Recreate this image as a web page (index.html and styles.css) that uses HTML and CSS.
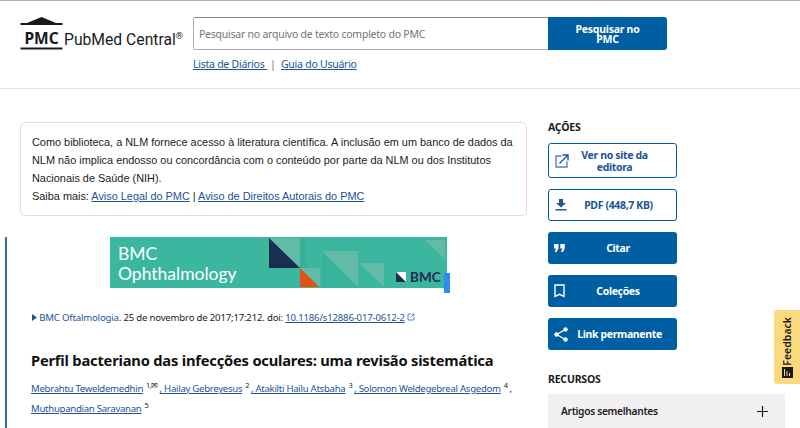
FILE: index.html
```html
<!DOCTYPE html>
<html lang="pt">
<head>
  <meta charset="UTF-8" />
  <meta name="viewport" content="width=device-width, initial-scale=1.0" />
  <title>Perfil bacteriano das infecções oculares - PMC</title>
  <link rel="stylesheet" href="styles.css">
</head>
<body>
  <header class="site-header">
    <a href="#" class="logo">
      <svg class="logo-mark" width="43" height="33" viewBox="0 0 43 33">
        <polygon points="21.5,0 36,6 7,6" fill="#1a1a1a"/>
        <rect x="0.5" y="6" width="42" height="2" fill="#1a1a1a"/>
        <rect x="0.5" y="30.5" width="42" height="2" fill="#1a1a1a"/>
        <text x="21.5" y="27" text-anchor="middle" class="logo-pmc">PMC</text>
      </svg>
      <span class="logo-name">PubMed Central<sup>®</sup></span>
    </a>
    <div class="search">
      <form class="search-row">
        <input class="search-input" type="text" placeholder="Pesquisar no arquivo de texto completo do PMC">
        <button class="search-btn" type="button">Pesquisar no PMC</button>
      </form>
      <div class="search-links">
        <a href="#">Lista de Diários </a>
        <span class="sep">|</span>
        <a href="#">Guia do Usuário</a>
      </div>
    </div>
  </header>

  <div class="layout">
    <main class="main-col">
      <div class="notice">
        <p>Como biblioteca, a NLM fornece acesso à literatura científica. A inclusão em um banco de dados da NLM não implica endosso ou concordância com o conteúdo por parte da NLM ou dos Institutos Nacionais de Saúde (NIH).</p>
        <p>Saiba mais: <a href="#">Aviso Legal do PMC</a> | <a href="#">Aviso de Direitos Autorais do PMC</a></p>
      </div>

      <article class="article">
        <div class="banner">
          <svg width="337" height="51" viewBox="0 0 337 51">
            <rect width="337" height="51" fill="#3bb79f"/>
            <polygon points="190,1 196,1 196,31 190,31" fill="#37b09a"/>
            <polygon points="212,14 248,50 212,50" fill="#38b29b"/>
            <polygon points="159,1 190,1 190,31" fill="#62bba6"/>
            <polygon points="159,1 190,31 159,31" fill="#1b2e52"/>
            <polygon points="190,31 210,31 210,50" fill="#62bba6"/>
            <polygon points="190,31 209,50 190,50" fill="#e55113"/>
            <polygon points="212,14 248,14 248,50" fill="#62bba6"/>
            <polygon points="249,26 274,26 274,50" fill="#62bba6"/>
            <polygon points="315,3 335,3 335,22" fill="#62bba6"/>
            <rect x="286" y="35" width="10" height="10" fill="#fff"/>
            <polygon points="286,35 296,45 286,45" fill="#1b2e52"/>
            <text x="8" y="22.500" class="banner-title">BMC</text>
            <text x="8" y="42.500" class="banner-title">Ophthalmology</text>
            <text x="300" y="45" class="banner-bmc">BMC</text>
          </svg>
          <span class="banner-handle"></span>
        </div>

        <p class="citation">
          <svg class="tri" width="5" height="7" viewBox="0 0 5 7"><polygon points="0,0 5,3.5 0,7" fill="#205493"/></svg>
          <a href="#" class="plain">BMC Oftalmologia</a>. 25 de novembro de 2017;17:212. doi: <a href="#">10.1186/s12886-017-0612-2</a>
          <svg class="ext" width="8" height="8" viewBox="0 0 8 8" fill="none" stroke="#5b8fc0" stroke-width="1"><path d="M4 1H1v6h6V4M3.5 4.5L7 1M5 1h2v2"/></svg>
        </p>

        <h1 class="title">Perfil bacteriano das infecções oculares: uma revisão sistemática</h1>

        <p class="authors">
          <a href="#">Mebrahtu Teweldemedhin</a><sup>1,✉</sup><a href="#">, Hailay Gebreyesus</a><sup>2</sup><a href="#">, Atakilti Hailu Atsbaha</a><sup>3</sup><a href="#">, Solomon Weldegebreal Asgedom</a><sup>4</sup>,<br>
          <a href="#">Muthupandian Saravanan</a><sup>5</sup>
        </p>
      </article>
    </main>

    <aside class="side-col">
      <h2 class="side-head">AÇÕES</h2>
      <div class="actions">
        <a href="#" class="action outline tall">
          <svg width="14" height="14" viewBox="0 0 14 14" fill="none" stroke="#5a83ad" stroke-width="1.4"><path d="M6.5 2H1v11h11V7.5"/><path d="M4.5 9.5L12.5 1.5M7.5 1h5.5v5.5" stroke="#205493"/></svg>
          <span>Ver no site da editora</span>
        </a>
        <a href="#" class="action outline">
          <svg width="12" height="12" viewBox="0 0 12 12" fill="#205493"><path d="M4 0h4v4h3L6 8.500 1 4h3z"/><rect x="0.500" y="10" width="11" height="1.500"/></svg>
          <span>PDF (448,7 KB)</span>
        </a>
        <a href="#" class="action solid">
          <svg width="11" height="8" viewBox="0 0 11 8" fill="#fff"><path d="M0 0h4.500v4.500L2.500 8H.8l1.200-3.500H0zM6.300 0h4.500v4.500L8.800 8H7.100l1.200-3.500h-2z"/></svg>
          <span>Citar</span>
        </a>
        <a href="#" class="action solid">
          <svg width="11" height="14" viewBox="0 0 11 14" fill="none" stroke="#fff" stroke-width="1.400"><path d="M1 1h9v11.500l-4.500-2.200L1 12.500z"/></svg>
          <span>Coleções</span>
        </a>
        <a href="#" class="action solid">
          <svg width="14" height="15" viewBox="0 0 14 15" fill="#fff" stroke="#fff"><circle cx="11.500" cy="2.500" r="1.800"/><circle cx="2.500" cy="7.500" r="1.800"/><circle cx="11.500" cy="12.500" r="1.800"/><path d="M11.500 2.500l-9 5 9 5" fill="none" stroke-width="1.200"/></svg>
          <span>Link permanente</span>
        </a>
      </div>
      <h2 class="side-head res">RECURSOS</h2>
      <div class="accordion">
        <span>Artigos semelhantes</span>
        <svg width="11" height="11" viewBox="0 0 11 11" stroke="#1a1a1a" stroke-width="1.200"><path d="M5.500 0v11M0 5.500h11"/></svg>
      </div>
    </aside>
  </div>

  <a href="#" class="feedback">
    <span>Feedback</span>
    <svg width="11" height="11" viewBox="0 0 11 11"><rect width="11" height="11" fill="#1a1a1a"/><path d="M2.500 9V2M5 9V4M7.500 9V6" stroke="#fbd97f" stroke-width="1"/></svg>
  </a>
</body>
</html>
```
FILE: styles.css
```css
body {
  font-family: "Noto Sans", Arial, sans-serif;
  margin: 0;
  padding: 0;
  height: 428px;
  overflow: hidden;
  background-color: #fff;
  color: #1b1b1b;
}
a {
  color: #205493;
}
p {
  margin: 0;
}
.site-header {
  display: flex;
  height: 89px;
  padding: 16px 0 0 20px;
  box-sizing: border-box;
  border-top: 1px solid #aeb0b5;
  border-bottom: 1px solid #e4e4e4;
}
.logo {
  display: flex;
  align-items: flex-start;
  width: 173px;
  color: #1b1b1b;
  text-decoration: none;
}
.logo-mark {
  flex: none;
}
.logo-pmc {
  font: bold 15.500px "Noto Sans", sans-serif;
  fill: #1a1a1a;
}
.logo-name {
  font-family: Roboto, sans-serif;
  font-size: 15.700px;
  margin: 13px 0 0 1px;
  white-space: nowrap;
}
.logo-name sup {
  font-size: 9px;
  line-height: 0;
  vertical-align: 6px;
}
.search-row {
  display: flex;
  height: 33px;
}
.search-input {
  width: 355px;
  box-sizing: border-box;
  border: 1px solid #aeb0b5;
  border-top-color: #8a8a8a;
  border-right: none;
  border-radius: 2px 0 0 2px;
  padding: 0 5px;
  font: 10.500px "Noto Sans", sans-serif;
  letter-spacing: -0.24px;
  outline: none;
}
.search-input::placeholder {
  color: #757575;
  opacity: 1;
}
.search-btn {
  width: 119px;
  border: none;
  border-radius: 0 3px 3px 0;
  background-color: #005ea2;
  color: #fff;
  font: bold 10.500px/10px "Noto Sans", sans-serif;
  letter-spacing: -0.25px;
  padding: 0 20px;
}
.search-links {
  margin-top: 6px;
  font-size: 10.500px;
  letter-spacing: -0.25px;
  line-height: 16px;
}
.search-links .sep {
  color: #71767a;
  margin: 0 3px;
}
.layout {
  display: flex;
  gap: 21px;
  padding: 0 15px 0 0;
}
.main-col {
  width: 527px;
  flex: none;
}
.notice {
  margin: 33px 0 21px 20px;
  width: 507px;
  box-sizing: border-box;
  height: 94px;
  padding: 10px 11px;
  border: 1px solid #f2d5cc;
  border-radius: 5px;
  font-family: "Liberation Sans", Arial, sans-serif;
  font-size: 10.900px;
  line-height: 18px;
  color: #1b1b1b;
}
.article {
  margin-left: 5px;
  padding: 0 0 0 24px;
  border-left: 2px solid #3a6ca8;
  height: 191px;
  box-sizing: border-box;
}
.banner {
  position: relative;
  width: 337px;
  height: 51px;
  margin-left: 79px;
}
.banner svg {
  display: block;
}
.banner-title {
  font: 400 17.500px Lato, sans-serif;
  fill: #fff;
}
.banner-bmc {
  font: bold 13.500px Lato, sans-serif;
  fill: #1b2e52;
}
.banner-handle {
  position: absolute;
  right: -3px;
  top: 36px;
  width: 6px;
  height: 20px;
  background-color: #2f8cf0;
}
.citation {
  margin-top: 22px;
  font-size: 9.600px;
  letter-spacing: -0.19px;
  line-height: 16px;
  white-space: nowrap;
}
.plain {
  text-decoration: none;
}
.tri {
  margin-left: 1px;
}
.title {
  margin: 23px 0 0;
  font-size: 14.700px;
  letter-spacing: -0.2px;
  line-height: 22px;
  font-weight: 700;
  color: #111;
  white-space: nowrap;
}
.authors {
  margin-top: 8px;
  font-size: 9.600px;
  letter-spacing: -0.28px;
  line-height: 20px;
  white-space: nowrap;
}
.authors sup {
  font-size: 7.500px;
  letter-spacing: -0.6px;
  line-height: 0;
  margin: 0 2px 0 3px;
  vertical-align: 4px;
}
.side-col {
  width: 237px;
  flex: none;
}
.side-head {
  margin: 31px 0 8px;
  font-size: 10.500px;
  letter-spacing: -0.2px;
  line-height: 15px;
  font-weight: 700;
  color: #1b1b1b;
}
.side-head.res {
  margin: 22px 0 7px;
}
.actions {
  display: flex;
  flex-direction: column;
  gap: 11px;
  width: 129px;
}
.action {
  display: flex;
  align-items: center;
  box-sizing: border-box;
  height: 32px;
  padding: 0 6px;
  border-radius: 3px;
  font-size: 10.500px;
  letter-spacing: -0.35px;
  line-height: 12px;
  font-weight: 700;
  text-decoration: none;
}
.action span {
  flex: 1;
  text-align: center;
}
.action.tall {
  height: 35px;
}
.action.tall span {
  padding-right: 10px;
}
.action.outline {
  background-color: #fff;
  border: 1.500px solid #005ea2;
  color: #205493;
}
.action.solid {
  background-color: #005ea2;
  color: #fff;
}
.accordion {
  display: flex;
  align-items: center;
  justify-content: space-between;
  height: 34px;
  padding: 0 17px 0 13px;
  background-color: #f0f0f0;
  font-size: 10.200px;
  letter-spacing: -0.3px;
  font-weight: 600;
}
.feedback {
  position: absolute;
  right: 0;
  top: 310px;
  width: 26px;
  height: 74px;
  box-sizing: border-box;
  padding: 7px 0 6px;
  display: flex;
  flex-direction: column;
  align-items: center;
  justify-content: space-between;
  background-color: #fbd97f;
  border-radius: 3px 0 0 3px;
  color: #1b1b1b;
  text-decoration: none;
}
.feedback span {
  writing-mode: vertical-rl;
  transform: rotate(180deg);
  font: 600 10.500px "Noto Sans", sans-serif;
}
```
